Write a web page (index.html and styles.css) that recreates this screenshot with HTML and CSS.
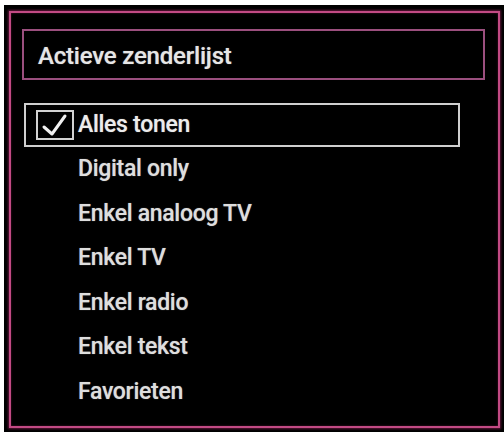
FILE: index.html
```html
<!DOCTYPE html>
<html lang="nl">
<head>
<meta charset="utf-8">
<title>Actieve zenderlijst</title>
<link rel="stylesheet" href="styles.css">
</head>
<body>
<div class="screen">
  <div class="frame">
    <div class="title-box">
      <h1 class="title">Actieve zenderlijst</h1>
    </div>
    <ul class="list">
      <li class="item selected">
        <svg class="check" width="38" height="30" viewBox="0 0 38 30" aria-hidden="true">
          <rect x="1" y="1" width="36" height="28" fill="none" stroke="#d2d2d2" stroke-width="2"/>
          <path d="M8 17 L16 24 L29 6" fill="none" stroke="#f0f0f0" stroke-width="3" stroke-linecap="round" stroke-linejoin="round"/>
        </svg>
        <span class="label">Alles tonen</span>
      </li>
      <li class="item">Digital only</li>
      <li class="item">Enkel analoog TV</li>
      <li class="item">Enkel TV</li>
      <li class="item">Enkel radio</li>
      <li class="item">Enkel tekst</li>
      <li class="item">Favorieten</li>
    </ul>
  </div>
</div>
</body>
</html>
```

FILE: styles.css
```css
html, body {
  margin: 0;
  padding: 0;
  background: #ffffff;
}

.screen {
  box-sizing: border-box;
  margin: 5px 0 0 4px;
  width: 500px;
  height: 427px;
  background: #000000;
  padding: 6px 4px 4px 5px;
  font-family: Roboto, "Open Sans", "Liberation Sans", sans-serif;
  color: #e2e2e2;
}

.frame {
  box-sizing: border-box;
  height: 100%;
  border: 2px solid #c24a84;
  box-shadow: 0 0 2px 1px #5e1638, inset 0 0 2px #5e1638;
  padding: 16px 13px 0 11px;
}

.title-box {
  box-sizing: border-box;
  height: 51px;
  border: 2px solid #9b4f7e;
  padding: 4px 0 0 14px;
}

.title {
  margin: 0;
  font-size: 24px;
  font-weight: 500;
  letter-spacing: -0.2px;
  line-height: 43px;
  color: #e6e6e6;
  text-shadow: 0 0 1px rgba(255, 255, 255, 0.5);
}

.list {
  list-style: none;
  margin: 23px 0 0 0;
  padding: 0;
}

.item {
  box-sizing: border-box;
  height: 44.5px;
  padding-left: 56px;
  font-size: 23px;
  font-weight: 500;
  letter-spacing: -0.3px;
  line-height: 44.5px;
  color: #dedede;
  text-shadow: 0 0 1px rgba(255, 255, 255, 0.5);
}

.item.selected {
  display: flex;
  align-items: center;
  width: 436px;
  height: 44px;
  margin-left: 2px;
  padding-left: 10px;
  border: 2px solid #cfcfcf;
  line-height: 28px;
}

.check {
  flex: none;
  display: block;
  margin-right: 4px;
}

.label {
  color: #ececec;
}
```
